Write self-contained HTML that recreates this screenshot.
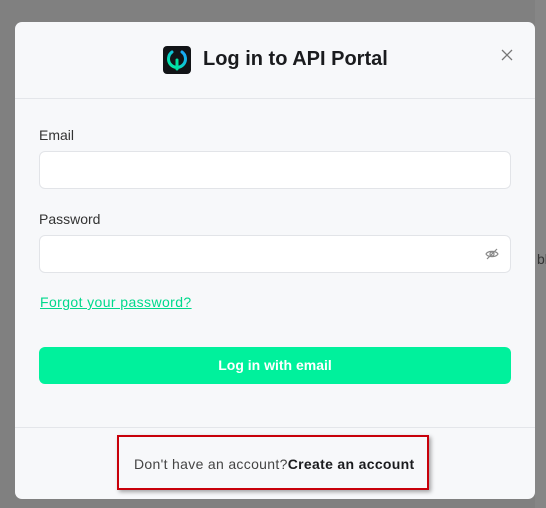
<!DOCTYPE html>
<html><head><style>
body{margin:0;width:546px;height:508px;background:#808080;font-family:"Liberation Sans",sans-serif;position:relative;overflow:hidden}
.modal{position:absolute;left:15px;top:22px;width:520px;height:477px;background:#f7f8fa;border-radius:7px;overflow:hidden}
.hdr{height:76px;border-bottom:1px solid #e4e6ea;position:relative}
.logo{position:absolute;left:148px;top:24px;width:28px;height:28px;background:#121417;border-radius:4px}
.title{position:absolute;left:188px;top:26px;font-size:20px;font-weight:bold;color:#1a1b1e}
.lbl{position:absolute;left:24px;font-size:14px;color:#333}
.in{position:absolute;left:24px;width:470px;height:36px;background:#fff;border:1px solid #e2e4e8;border-radius:6px}
.link{position:absolute;left:25px;top:272px;font-size:14px;color:#00d98c;text-decoration:underline;letter-spacing:0.4px}
.btn{position:absolute;left:24px;top:325px;width:472px;height:37px;background:#00f19c;border-radius:6px;color:#fff;font-size:14px;font-weight:bold;text-align:center;line-height:37px}
.ftr{position:absolute;left:0;top:405px;width:520px;border-top:1px solid #e4e6ea}
.red{position:absolute;left:117px;top:435px;width:308px;height:51px;border:2px solid #c8000a;box-shadow:2px 2px 4px rgba(0,0,0,.35)}
.ft{position:absolute;left:134px;top:456px;font-size:14px;color:#444;white-space:nowrap;letter-spacing:0.32px}
</style></head><body>
<div style="position:absolute;left:535px;top:0;width:11px;height:508px;background:#868686"></div>
<div style="position:absolute;left:537px;top:251px;font-size:14px;color:#333">bl</div>
<div class="modal">
<div class="hdr">
<div class="logo"><svg width="28" height="28" viewBox="0 0 28 28"><defs><linearGradient id="g" x1="0" y1="1" x2="1" y2="0"><stop offset="0" stop-color="#00f19c"/><stop offset="1" stop-color="#1aa3ff"/></linearGradient></defs><path d="M9 6 A8.5 8.5 0 1 0 19 6" fill="none" stroke="url(#g)" stroke-width="3" stroke-linecap="round"/><path d="M14 14v9" stroke="#00e0a0" stroke-width="3" stroke-linecap="round"/></svg></div>
<div class="title">Log in to API Portal</div>
<svg style="position:absolute;left:486px;top:27px" width="12" height="12" viewBox="0 0 12 12" stroke="#777" stroke-width="1.3"><path d="M1 1L11 11M11 1L1 11"/></svg>
</div>
<div class="lbl" style="top:105px">Email</div>
<div class="in" style="top:129px"></div>
<div class="lbl" style="top:189px">Password</div>
<div class="in" style="top:213px"><svg style="position:absolute;right:11px;top:11px" width="14" height="14" viewBox="0 0 14 14" fill="none" stroke="#888" stroke-width="1.2"><path d="M1 7C3 3.5 11 3.5 13 7C11 10.5 3 10.5 1 7Z"/><circle cx="7" cy="7" r="2"/><path d="M2 12L12 2"/></svg></div>
<div class="link">Forgot your password?</div>
<div class="btn">Log in with email</div>
<div class="ftr"></div>
</div>
<div class="red"></div>
<div class="ft">Don't have an account?<b style="color:#1a1b1e">Create an account</b></div>
</body></html>
